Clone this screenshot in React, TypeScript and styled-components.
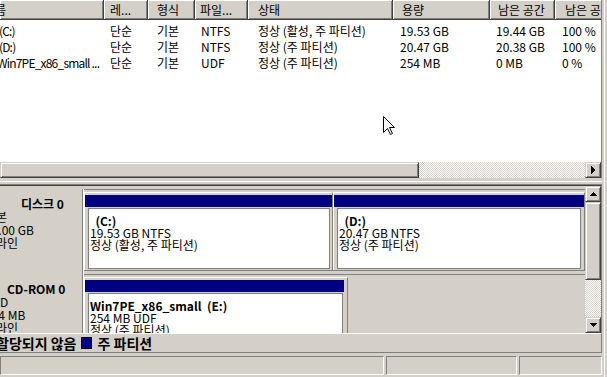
import React from 'react';
import styled, { createGlobalStyle } from 'styled-components';

const face = '#d4d0c8';
const shadow = '#808080';
const darkShadow = '#404040';
const navy = '#000080';

const GlobalStyle = createGlobalStyle`
  * {
    box-sizing: border-box;
  }

  html,
  body {
    margin: 0;
    padding: 0;
    background: ${face};
  }

  body {
    font-family: "Noto Sans CJK KR", "Liberation Sans", sans-serif;
    font-size: 12px;
    color: #000;
  }
`;

const Window = styled.div`
  position: relative;
  width: 607px;
  height: 377px;
  overflow: hidden;
  display: flex;
  background: ${face};
`;

const Content = styled.div`
  width: 602px;
  display: flex;
  flex-direction: column;
`;

const RightFrame = styled.div`
  flex: 1;
  background: linear-gradient(
    to right,
    ${face} 0 2px,
    #fff 2px 3px,
    ${face} 3px
  );
`;

/* ---------- volume list ---------- */

const ListPane = styled.div`
  height: 179px;
  flex: none;
  display: flex;
  flex-direction: column;
  border-right: 1px solid ${shadow};
  border-bottom: 1px solid ${face};
  overflow: hidden;
`;

const Header = styled.div`
  height: 20px;
  flex: none;
  display: flex;
  overflow: hidden;
  background: ${face};
`;

const HeaderCell = styled.div<{ $w: number; $pad: number }>`
  width: ${(p) => p.$w}px;
  flex: none;
  text-indent: ${(p) => p.$pad}px;
  line-height: 20px;
  white-space: nowrap;
  overflow: hidden;
  border-right: 1px solid ${darkShadow};
  border-bottom: 1px solid ${darkShadow};
  box-shadow: inset 1px 1px #fff, inset -1px -1px ${shadow};
`;

const ListBody = styled.div`
  flex: 1;
  background: #fff;
  padding-top: 3px;
  overflow: hidden;
`;

const ListRow = styled.div`
  height: 16px;
  display: flex;
  line-height: 16px;
`;

const ListCell = styled.div<{ $w: number; $pad: number; $tracking: number }>`
  width: ${(p) => p.$w}px;
  flex: none;
  text-indent: ${(p) => p.$pad}px;
  letter-spacing: ${(p) => p.$tracking}px;
  white-space: pre;
  overflow: hidden;
`;

/* ---------- scrollbars ---------- */

const HScroll = styled.div`
  height: 16px;
  flex: none;
  display: flex;
`;

const VScroll = styled.div`
  width: 16px;
  flex: none;
  display: flex;
  flex-direction: column;
`;

const Raised = styled.div`
  border: 1px solid;
  border-color: ${face} ${darkShadow} ${darkShadow} ${face};
  box-shadow: inset 1px 1px #fff, inset -1px -1px ${shadow};
  background: ${face};
`;

const Thumb = styled(Raised)<{ $w?: number; $h?: number }>`
  flex: none;
  width: ${(p) => (p.$w ? `${p.$w}px` : 'auto')};
  height: ${(p) => (p.$h ? `${p.$h}px` : 'auto')};
`;

const ArrowButton = styled(Raised)`
  width: 16px;
  height: 16px;
  flex: none;
  display: flex;
  align-items: center;
  justify-content: center;
`;

const Track = styled.div`
  flex: 1;
  background-color: #fff;
  background-image: repeating-conic-gradient(${face} 0 25%, #fff 0 50%);
  background-size: 2px 2px;
`;

const arrowPoints = {
  right: '2,0 6,4 2,8',
  up: '0,6 4,2 8,6',
  down: '0,2 4,6 8,2',
};

const Arrow: React.FC<{ dir: keyof typeof arrowPoints }> = ({ dir }) => (
  <svg width="8" height="8" viewBox="0 0 8 8" shapeRendering="crispEdges">
    <polygon points={arrowPoints[dir]} fill="#000" />
  </svg>
);

/* ---------- splitter & disk view ---------- */

const Splitter = styled.div`
  height: 5px;
  flex: none;
  background: linear-gradient(
    to bottom,
    ${face} 0 2px,
    #fff 2px 3px,
    ${face} 3px
  );
`;

const DiskPane = styled.div`
  height: 149px;
  flex: none;
  display: flex;
  border-top: 1px solid ${shadow};
  border-right: 1px solid ${shadow};
  box-shadow: inset 0 1px ${darkShadow};
  padding-top: 1px;
`;

const DiskRows = styled.div`
  flex: 1;
  display: flex;
  flex-direction: column;
  padding-top: 3px;
  overflow: hidden;
`;

const DiskRow = styled.div`
  height: 85px;
  flex: none;
  display: flex;
`;

const DiskLabel = styled.div`
  width: 84px;
  flex: none;
  padding-top: 8px;
  line-height: 13px;
  white-space: nowrap;
  overflow: hidden;
  box-shadow: inset -1px 0 #fff, inset -2px 0 ${shadow};
`;

const LabelText = styled.div`
  margin-left: -15px;
`;

const LabelTitle = styled.div<{ $indent: number }>`
  padding-left: ${(p) => p.$indent}px;
  font-weight: bold;
`;

const PartArea = styled.div`
  width: 501px;
  height: 82px;
  flex: none;
  display: flex;
  padding-top: 2px;
  border-top: 1px solid ${shadow};
  border-bottom: 1px solid ${shadow};
`;

const PartCell = styled.div<{ $w: number; $padRight: number }>`
  width: ${(p) => p.$w}px;
  flex: none;
  display: flex;
  flex-direction: column;
  padding: 2px ${(p) => p.$padRight}px 0 0;
  border-top: 1px solid #fff;
  border-left: 1px solid #fff;
  border-right: 1px solid ${shadow};
`;

const PartStripe = styled.div`
  height: 12px;
  flex: none;
  background: ${navy};
`;

const PartBox = styled.div<{ $mr: number }>`
  flex: 1;
  margin: 1px ${(p) => p.$mr}px 1px 3px;
  padding: 6px 1px 0;
  background: #fff;
  border: 1px solid ${shadow};
  line-height: 12px;
  white-space: pre;
  overflow: hidden;
`;

const PartName = styled.div`
  font-weight: bold;
`;

/* ---------- legend & status bar ---------- */

const Legend = styled.div`
  height: 20px;
  flex: none;
  display: flex;
  align-items: center;
  border-top: 1px solid #fff;
  border-bottom: 1px solid ${shadow};
  border-right: 1px solid ${shadow};
  font-size: 14px;
  font-weight: bold;
  white-space: nowrap;
  overflow: hidden;
`;

const LegendText = styled.span<{ $ml: number }>`
  flex: none;
  margin-left: ${(p) => p.$ml}px;
`;

const Swatch = styled.span`
  width: 11px;
  height: 12px;
  flex: none;
  margin-left: 5px;
  background: ${navy};
  border: 1px solid #000;
`;

const StatusBar = styled.div`
  height: 19px;
  flex: none;
  margin-top: 3px;
  display: flex;
  gap: 2px;
`;

const StatusPane = styled.div<{ $w: number }>`
  width: ${(p) => p.$w}px;
  flex: none;
  border: 1px solid;
  border-color: ${shadow} #fff #fff ${shadow};
`;

const Cursor = styled.svg`
  position: absolute;
  left: 383px;
  top: 116px;
`;

/* ---------- data ---------- */

const columns = [
  { w: 104, headPad: -16, cellPad: -3, tracking: -0.8, title: '이름' },
  { w: 44, headPad: 6, cellPad: 6, tracking: 0, title: '레...' },
  { w: 47, headPad: 9, cellPad: 9, tracking: 0, title: '형식' },
  { w: 53, headPad: 5, cellPad: 6, tracking: 0, title: '파일...' },
  { w: 145, headPad: 10, cellPad: 10, tracking: 0, title: '상태' },
  { w: 97, headPad: 9, cellPad: 7, tracking: 0, title: '용량' },
  { w: 65, headPad: 8, cellPad: 6, tracking: 0, title: '남은 공간' },
  { w: 90, headPad: 10, cellPad: 7, tracking: 0, title: '남은 공간 (%)' },
];

const volumes = [
  [' (C:)', '단순', '기본', 'NTFS', '정상 (활성, 주 파티션)', '19.53 GB', '19.44 GB', '100 %'],
  [' (D:)', '단순', '기본', 'NTFS', '정상 (주 파티션)', '20.47 GB', '20.38 GB', '100 %'],
  ['Win7PE_x86_small ...', '단순', '기본', 'UDF', '정상 (주 파티션)', '254 MB', '0 MB', '0 %'],
];

const disks = [
  {
    title: '디스크 0',
    indent: 36,
    lines: ['기본', '40.00 GB', '온라인'],
    parts: [
      { w: 249, padRight: 0, mr: 2, name: '  (C:)', size: '19.53 GB NTFS', status: '정상 (활성, 주 파티션)' },
      { w: 252, padRight: 0, mr: 3, name: '  (D:)', size: '20.47 GB NTFS', status: '정상 (주 파티션)' },
    ],
  },
  {
    title: 'CD-ROM 0',
    indent: 22,
    lines: ['DVD', '254 MB', '온라인'],
    parts: [
      { w: 264, padRight: 3, mr: 1, name: 'Win7PE_x86_small  (E:)', size: '254 MB UDF', status: '정상 (주 파티션)' },
    ],
  },
];

const App: React.FC = () => (
  <>
    <GlobalStyle />
    <Window>
      <Content>
        <ListPane>
          <Header>
            {columns.map((c) => (
              <HeaderCell key={c.title} $w={c.w} $pad={c.headPad}>
                {c.title}
              </HeaderCell>
            ))}
          </Header>
          <ListBody>
            {volumes.map((row) => (
              <ListRow key={row[0]}>
                {row.map((v, i) => (
                  <ListCell
                    key={i}
                    $w={columns[i].w}
                    $pad={columns[i].cellPad}
                    $tracking={columns[i].tracking}
                  >
                    {v}
                  </ListCell>
                ))}
              </ListRow>
            ))}
          </ListBody>
          <HScroll>
            <Thumb $w={419} />
            <Track />
            <ArrowButton>
              <Arrow dir="right" />
            </ArrowButton>
          </HScroll>
        </ListPane>

        <Splitter />

        <DiskPane>
          <DiskRows>
            {disks.map((d) => (
              <DiskRow key={d.title}>
                <DiskLabel>
                  <LabelText>
                    <LabelTitle $indent={d.indent}>{d.title}</LabelTitle>
                    {d.lines.map((l) => (
                      <div key={l}>{l}</div>
                    ))}
                  </LabelText>
                </DiskLabel>
                <PartArea>
                  {d.parts.map((p) => (
                    <PartCell key={p.name} $w={p.w} $padRight={p.padRight}>
                      <PartStripe />
                      <PartBox $mr={p.mr}>
                        <PartName>{p.name}</PartName>
                        <div>{p.size}</div>
                        <div>{p.status}</div>
                      </PartBox>
                    </PartCell>
                  ))}
                </PartArea>
              </DiskRow>
            ))}
          </DiskRows>
          <VScroll>
            <ArrowButton>
              <Arrow dir="up" />
            </ArrowButton>
            <Thumb $h={78} />
            <Track />
            <ArrowButton>
              <Arrow dir="down" />
            </ArrowButton>
          </VScroll>
        </DiskPane>

        <Legend>
          <LegendText $ml={-4}>할당되지 않음</LegendText>
          <Swatch />
          <LegendText $ml={5}>주 파티션</LegendText>
        </Legend>

        <StatusBar>
          <StatusPane $w={384} />
          <StatusPane $w={131} />
          <StatusPane $w={83} />
        </StatusBar>
      </Content>
      <RightFrame />

      <Cursor width="12" height="19" viewBox="0 0 12 19">
        <path
          d="M0.5 0.5 L0.5 16.5 L4.5 12.5 L7.5 18.5 L9.5 17.5 L6.5 11.5 L11.5 11.5 Z"
          fill="#fff"
          stroke="#000"
          strokeWidth="1"
        />
      </Cursor>
    </Window>
  </>
);

export default App;
